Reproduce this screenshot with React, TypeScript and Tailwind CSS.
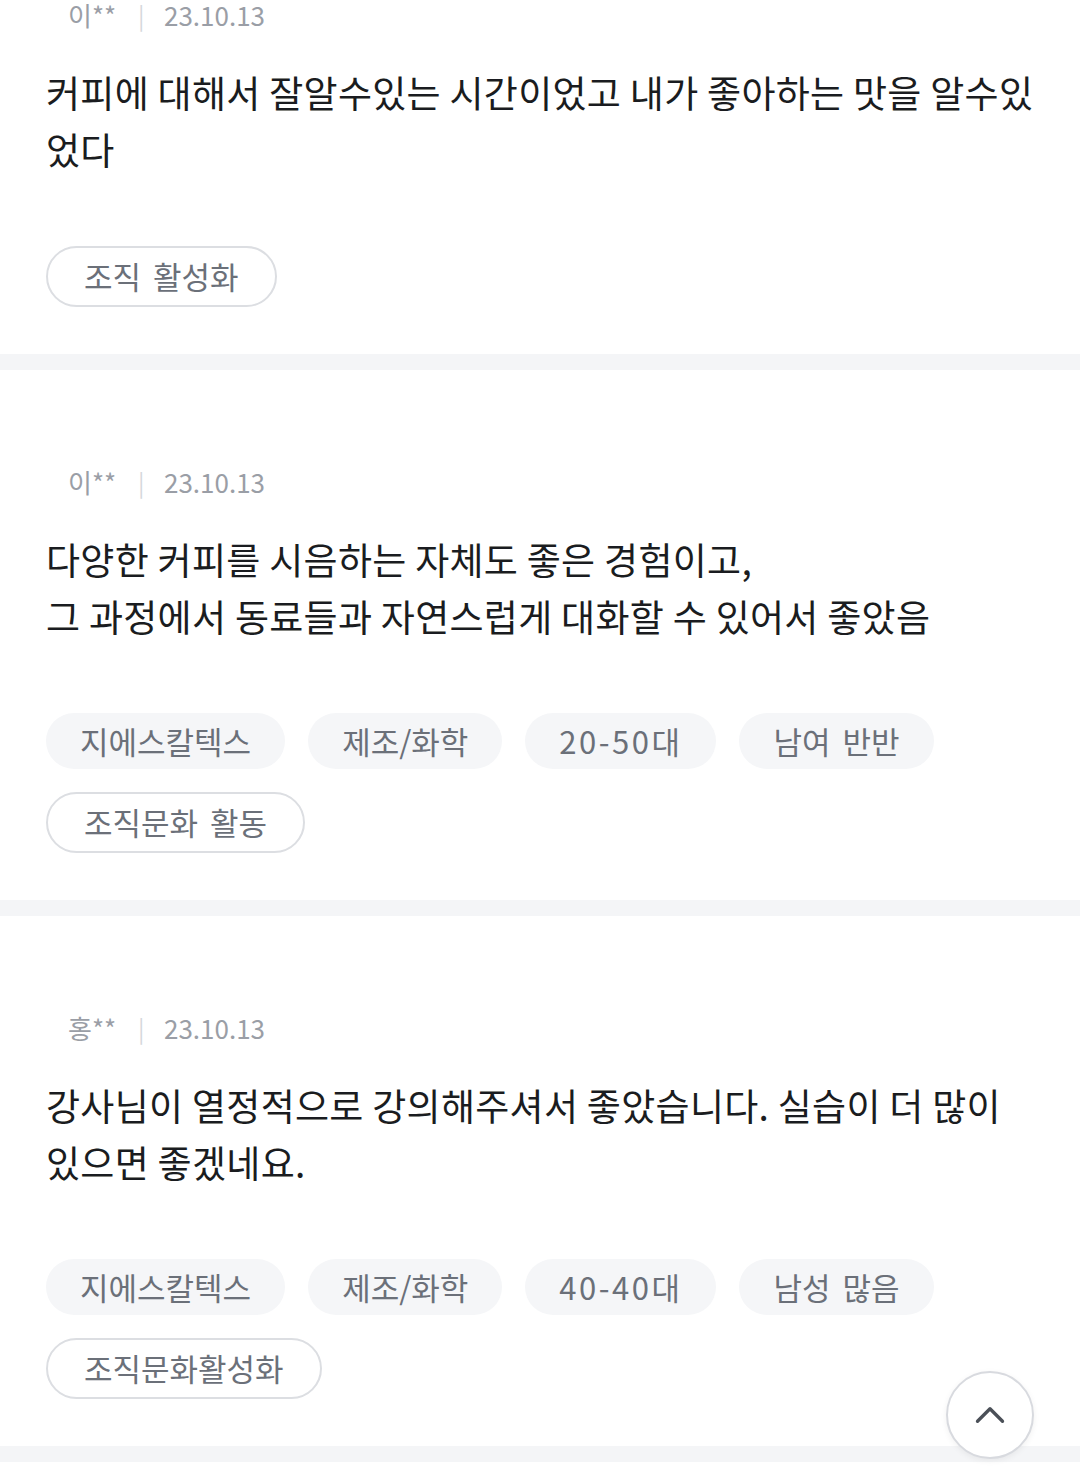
import { ChevronUp } from "lucide-react";

type Review = {
  name: string;
  date: string;
  body: string[];
  tags: string[];
  topic: string;
};

const reviews: Review[] = [
  {
    name: "이**",
    date: "23.10.13",
    body: ["커피에 대해서 잘알수있는 시간이었고 내가 좋아하는 맛을 알수있", "었다"],
    tags: [],
    topic: "조직 활성화",
  },
  {
    name: "이**",
    date: "23.10.13",
    body: ["다양한 커피를 시음하는 자체도 좋은 경험이고,", "그 과정에서 동료들과 자연스럽게 대화할 수 있어서 좋았음"],
    tags: ["지에스칼텍스", "제조/화학", "20-50대", "남여 반반"],
    topic: "조직문화 활동",
  },
  {
    name: "홍**",
    date: "23.10.13",
    body: ["강사님이 열정적으로 강의해주셔서 좋았습니다. 실습이 더 많이", "있으면 좋겠네요."],
    tags: ["지에스칼텍스", "제조/화학", "40-40대", "남성 많음"],
    topic: "조직문화활성화",
  },
];

function ReviewCard({ review, first }: { review: Review; first: boolean }) {
  return (
    <section className={`px-[46px] pb-[47px] ${first ? "pt-0" : "pt-[97px]"}`}>
      {/* meta */}
      <div className="flex items-center h-[30px] pl-[22px] text-[26px] leading-[30px] text-[#9a9ea6]">
        <span className="w-[70px]">{review.name}</span>
        <span className="w-[26px] text-[#d6d8dc] text-[24px]">|</span>
        <span>{review.date}</span>
      </div>

      {/* body */}
      <div className="mt-[34px] text-[37px] leading-[57px] text-[#1a1c20] tracking-[0.3px]">
        {review.body.map((line, i) => (
          <p key={i} className="whitespace-nowrap">
            {line}
          </p>
        ))}
      </div>

      {/* tags */}
      <div className="mt-[68px] flex flex-wrap gap-x-[23px] gap-y-[23px] [word-spacing:5px]">
        {review.tags.map((t) => (
          <span
            key={t}
            className={`h-[56px] px-[34px] rounded-full bg-[#f5f6f8] text-[31px] text-[#6b7079] flex items-center ${
              /\d/.test(t) ? "tracking-[2.5px]" : ""
            }`}
          >
            {t}
          </span>
        ))}
        <span className="h-[61px] px-[36px] rounded-full border-2 border-[#dcdee2] text-[31px] text-[#6b7079] flex items-center">
          {review.topic}
        </span>
      </div>
    </section>
  );
}

export default function App() {
  return (
    <div
      className="relative w-[1080px] h-[1480px] overflow-hidden bg-white"
      style={{ fontFamily: '"Noto Sans CJK KR", "Noto Sans", sans-serif' }}
    >
      {reviews.map((r, i) => (
        <div key={i}>
          <ReviewCard review={r} first={i === 0} />
          <div className="h-[16px] bg-[#f4f5f7]" />
        </div>
      ))}

      <button className="absolute left-[946px] top-[1371px] w-[88px] h-[88px] rounded-full bg-white border-2 border-[#d8dadf] flex items-center justify-center shadow-[0_2px_6px_rgba(0,0,0,0.06)]">
        <ChevronUp size={50} strokeWidth={1.6} color="#4b5058" />
      </button>
    </div>
  );
}
